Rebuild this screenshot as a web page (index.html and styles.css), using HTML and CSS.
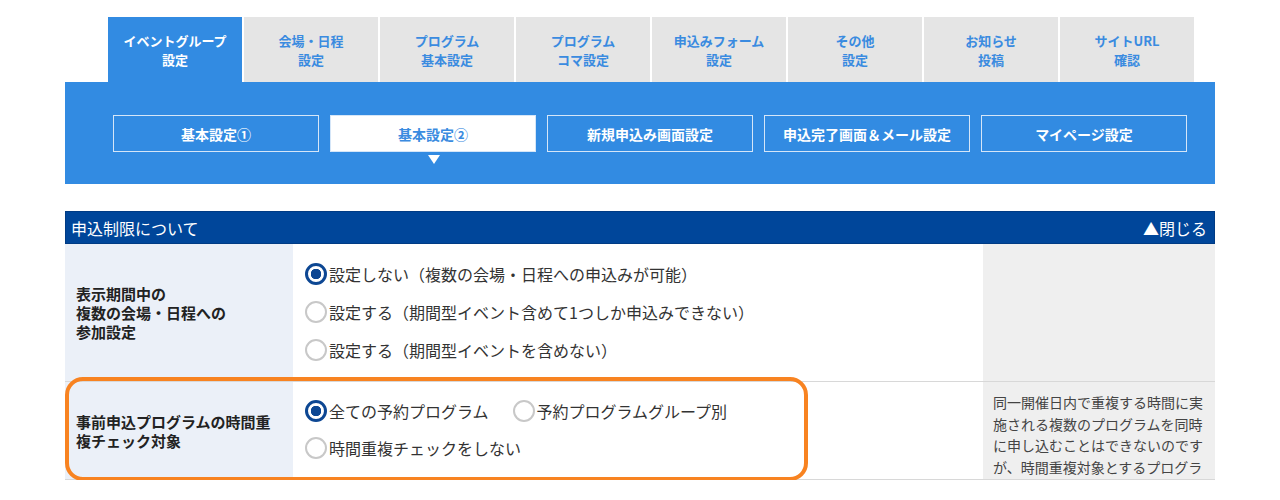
FILE: index.html
```html
<!DOCTYPE html>
<html lang="ja">
<head>
	<meta charset="utf-8">
	<title>イベントグループ設定</title>
	<link rel="stylesheet" href="styles.css">
</head>
<body>
	<div class="wrap">
		<ul class="tabs">
			<li class="tab active">イベントグループ<br>設定</li>
			<li class="tab">会場・日程<br>設定</li>
			<li class="tab">プログラム<br>基本設定</li>
			<li class="tab">プログラム<br>コマ設定</li>
			<li class="tab">申込みフォーム<br>設定</li>
			<li class="tab">その他<br>設定</li>
			<li class="tab">お知らせ<br>投稿</li>
			<li class="tab">サイトURL<br>確認</li>
		</ul>

		<div class="subnav">
			<a class="subBtn">基本設定①</a>
			<a class="subBtn current">基本設定②</a>
			<a class="subBtn">新規申込み画面設定</a>
			<a class="subBtn">申込完了画面＆メール設定</a>
			<a class="subBtn">マイページ設定</a>
		</div>

		<div class="section">
			<div class="sectionHead">
				<span>申込制限について</span>
				<span class="toggle">▲閉じる</span>
			</div>

			<div class="row">
				<div class="label">表示期間中の<br>複数の会場・日程への<br>参加設定</div>
				<div class="field">
					<label class="opt"><input type="radio" name="multi" checked>設定しない（複数の会場・日程への申込みが可能）</label>
					<label class="opt"><input type="radio" name="multi">設定する（期間型イベント含めて1つしか申込みできない）</label>
					<label class="opt"><input type="radio" name="multi">設定する（期間型イベントを含めない）</label>
				</div>
				<div class="note"></div>
			</div>

			<div class="row second">
				<div class="label">事前申込プログラムの時間重複チェック対象</div>
				<div class="field">
					<div class="optLine">
						<label class="opt"><input type="radio" name="dup" checked>全ての予約プログラム</label>
						<label class="opt"><input type="radio" name="dup">予約プログラムグループ別</label>
					</div>
					<label class="opt"><input type="radio" name="dup">時間重複チェックをしない</label>
				</div>
				<div class="note">同一開催日内で重複する時間に実施される複数のプログラムを同時に申し込むことはできないのですが、時間重複対象とするプログラ</div>
				<div class="highlight"></div>
			</div>
		</div>
	</div>
</body>
</html>
```

FILE: styles.css
```css
body {
	margin: 0;
	font-family: "Noto Sans CJK JP", "Noto Sans", sans-serif;
	color: #333;
	background: #fff;
}

.wrap {
	width: 1150px;
	margin-left: 65px;
	padding-top: 17px;
}

/* main tabs */
ul.tabs {
	display: flex;
	gap: 2px;
	list-style: none;
	margin: 0 0 0 43px;
	padding: 0;
}

li.tab {
	width: 134px;
	height: 65px;
	display: flex;
	align-items: center;
	justify-content: center;
	text-align: center;
	background: #e5e5e5;
	color: #3a8be0;
	font-size: 13px;
	font-weight: bold;
	line-height: 19px;
}

li.tab.active {
	background: #328be2;
	color: #fff;
}

/* sub navigation */
.subnav {
	display: flex;
	gap: 11px;
	height: 102px;
	box-sizing: border-box;
	padding: 33px 0 0 48px;
	background: #328be2;
}

.subBtn {
	position: relative;
	width: 206px;
	height: 37px;
	box-sizing: border-box;
	display: flex;
	align-items: center;
	justify-content: center;
	border: 1px solid #d5e6f8;
	color: #fff;
	font-size: 14px;
	font-weight: bold;
}

.subBtn.current {
	background: #fff;
	color: #3a8be0;
}

.subBtn.current::after {
	content: "";
	position: absolute;
	left: 97px;
	top: 39px;
	border-left: 6px solid transparent;
	border-right: 6px solid transparent;
	border-top: 9px solid #fff;
}

/* settings block */
.section {
	margin-top: 27px;
}

.sectionHead {
	display: flex;
	justify-content: space-between;
	align-items: center;
	height: 33px;
	box-sizing: border-box;
	padding: 0 7px 0 5px;
	background: #00469a;
	border: 1px solid #003b84;
	color: #fff;
	font-size: 16px;
}

.row {
	position: relative;
	display: grid;
	grid-template-columns: 228px 690px 232px;
	border-bottom: 1px solid #d8d8d8;
}

.label {
	display: flex;
	align-items: center;
	padding: 0 10px 0 11px;
	background: #ebf0f8;
	color: #222;
	font-size: 15px;
	font-weight: bold;
	line-height: 19px;
}

.field {
	display: flex;
	flex-direction: column;
	gap: 16px;
	padding: 19px 0 0 12px;
	height: 137px;
	box-sizing: border-box;
	font-size: 16px;
}

.note {
	background: #efefef;
	padding: 10px 8px 0 10px;
	font-size: 14px;
	line-height: 21.5px;
	color: #444;
	overflow: hidden;
}

.row.second .field {
	height: 97px;
	padding-top: 18px;
	gap: 15px;
}

.row.second .note {
	height: 97px;
	box-sizing: border-box;
}

.optLine {
	display: flex;
	gap: 24px;
}

label.opt {
	display: flex;
	align-items: center;
	height: 22px;
	line-height: 22px;
}

label.opt input {
	appearance: none;
	width: 22px;
	height: 22px;
	margin: 0 2px 0 0;
	border: 2px solid #c8c8c8;
	border-radius: 50%;
	background: #fff;
	box-sizing: border-box;
}

label.opt input:checked {
	border: 3px solid #0d4793;
	background: radial-gradient(circle, #0d4793 0 5px, #fff 5.5px);
}

/* orange frame around the time-overlap setting */
.highlight {
	position: absolute;
	left: 0;
	top: -5px;
	width: 743px;
	height: 104px;
	box-sizing: border-box;
	border: 4px solid #f88321;
	border-radius: 18px;
	pointer-events: none;
}
```
